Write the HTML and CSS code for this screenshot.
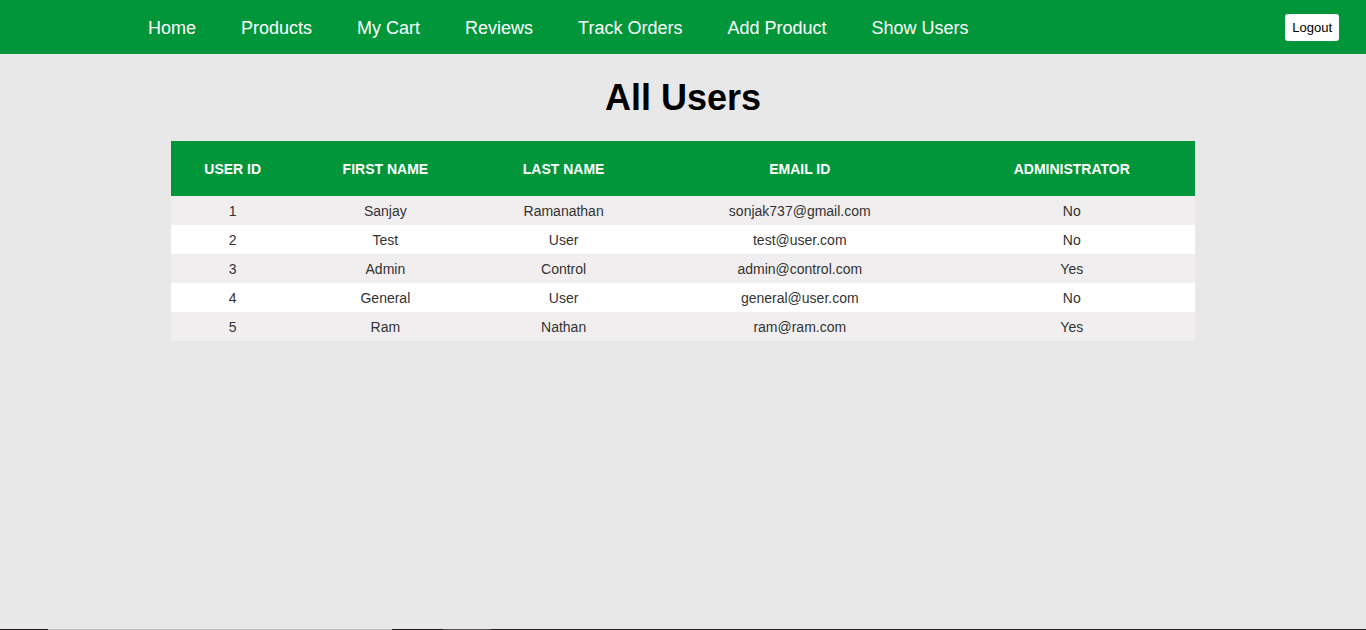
FILE: index.html
```html
<!DOCTYPE html>
<html lang="en">
<head>
<meta charset="utf-8">
<title>All Users</title>
<link rel="stylesheet" href="styles.css">
</head>
<body>
<header class="navbar">
  <nav class="nav-links">
    <a href="#">Home</a>
    <a href="#">Products</a>
    <a href="#">My Cart</a>
    <a href="#">Reviews</a>
    <a href="#">Track Orders</a>
    <a href="#">Add Product</a>
    <a href="#">Show Users</a>
  </nav>
  <button class="logout" type="button">Logout</button>
</header>
<main class="content">
  <h1 class="title">All Users</h1>
  <table class="users">
    <colgroup>
      <col class="col-id"><col class="col-first"><col class="col-last"><col class="col-email"><col class="col-admin">
    </colgroup>
    <thead>
      <tr><th scope="col">User ID</th><th scope="col">First Name</th><th scope="col">Last Name</th><th scope="col">Email ID</th><th scope="col">Administrator</th></tr>
    </thead>
    <tbody>
      <tr><td>1</td><td>Sanjay</td><td>Ramanathan</td><td>sonjak737@gmail.com</td><td>No</td></tr>
      <tr><td>2</td><td>Test</td><td>User</td><td>test@user.com</td><td>No</td></tr>
      <tr><td>3</td><td>Admin</td><td>Control</td><td>admin@control.com</td><td>Yes</td></tr>
      <tr><td>4</td><td>General</td><td>User</td><td>general@user.com</td><td>No</td></tr>
      <tr><td>5</td><td>Ram</td><td>Nathan</td><td>ram@ram.com</td><td>Yes</td></tr>
    </tbody>
  </table>
</main>
<footer class="edge"></footer>
</body>
</html>
```
FILE: styles.css
```css
* { box-sizing: border-box; }
body {
  margin: 0;
  min-height: 100vh;
  display: flex;
  flex-direction: column;
  background: #e8e8e8;
  font-family: "Liberation Sans", Arial, sans-serif;
}
.navbar {
  display: flex;
  align-items: center;
  justify-content: space-between;
  height: 54px;
  padding: 0 27px 0 148px;
  background: #009639;
}
.nav-links { display: flex; gap: 45px; padding-top: 2px; }
.nav-links a { color: #fff; font-size: 18px; line-height: 24px; text-decoration: none; }
.logout {
  padding: 6px 7px;
  border: 0;
  border-radius: 3px;
  background: #fff;
  color: #000;
  font: 13px/15px "Liberation Sans", Arial, sans-serif;
}
.content { flex: 1; }
.title {
  margin: 22px 0;
  font-size: 36px;
  line-height: 43px;
  text-align: center;
}
.users {
  width: 75%;
  margin: 0 auto;
  border-collapse: collapse;
  table-layout: fixed;
  text-align: center;
  font-size: 14px;
  color: #333;
}
.col-id { width: 12.1%; }
.col-first { width: 17.7%; }
.col-last { width: 17.1%; }
.col-email { width: 29%; }
.col-admin { width: 24.1%; }
.users th {
  height: 55px;
  padding: 0;
  background: #009639;
  color: #fff;
  text-transform: uppercase;
}
.users td { height: 29px; padding: 0; }
.users tbody tr { background: #fff; }
.users tbody tr:nth-child(odd) { background: #f0eeee; }
.edge {
  height: 1px;
  background: linear-gradient(to right, #1c1718 48px, #bfbfbf 48px 392px, #1c1718 392px 443px, #554f50 443px 491px, #2b2021 491px);
}
```
